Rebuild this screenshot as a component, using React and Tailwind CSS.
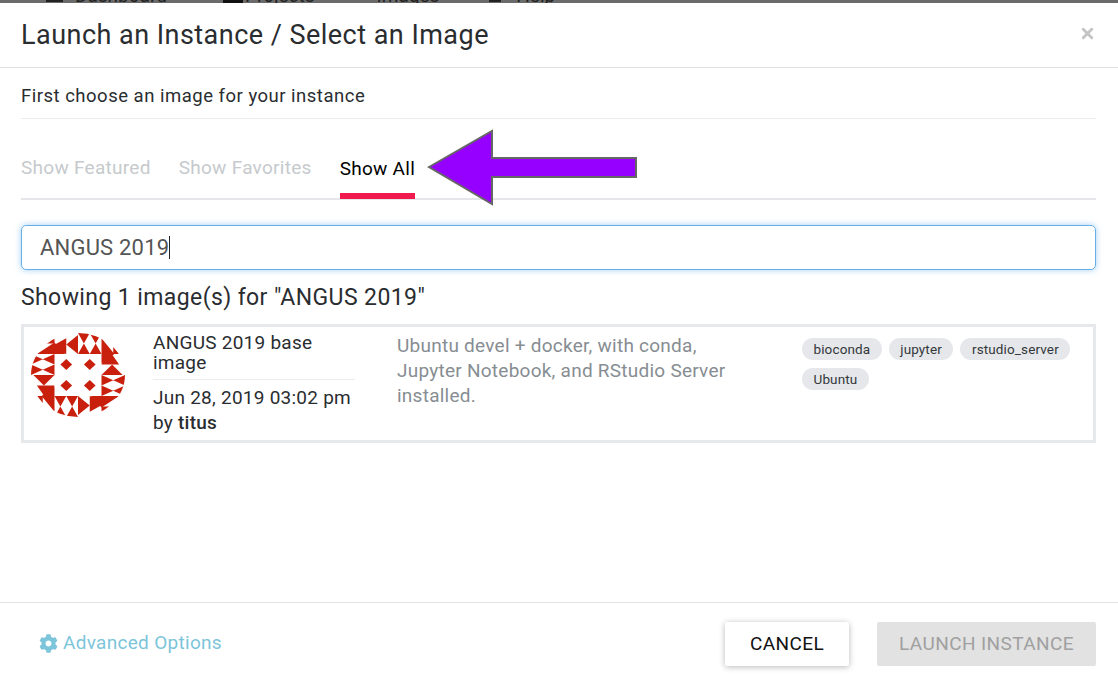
import { X } from "lucide-react";
import { FaCog } from "react-icons/fa";

const tags = ["bioconda", "jupyter", "rstudio_server", "Ubuntu"];

const LogoEdge = () => (
  <>
    {/* hourglass tile */}
    <polygon points="2,0 2.5,0 2,1 2.5,1" />
    <polygon points="2.5,0 3,0 2.5,1 3,1" />
    {/* arrow tile */}
    <polygon points="0.75,0.72 1.5,0.25 1.5,1" />
    <polygon points="1.5,0.55 2,0.1 2,1" />
    {/* corner tile */}
    <polygon points="3,0.25 3.55,1 3,1.45" />
    <polygon points="3.5,0.45 4,1 3.5,1" />
  </>
);

const Logo = () => (
  <svg width="94" height="84" viewBox="0 0 4 4" preserveAspectRatio="none" className="shrink-0 blur-[0.4px]">
    <defs>
      <clipPath id="logo-clip">
        <ellipse cx="2" cy="2" rx="2" ry="2" />
      </clipPath>
    </defs>
    <g clipPath="url(#logo-clip)" fill="#c8200c">
      <g><LogoEdge /></g>
      <g transform="rotate(90 2 2)"><LogoEdge /></g>
      <g transform="rotate(180 2 2)"><LogoEdge /></g>
      <g transform="rotate(270 2 2)"><LogoEdge /></g>
      {[[1.5, 1.5], [2.5, 1.5], [1.5, 2.5], [2.5, 2.5]].map(([x, y]) => (
        <polygon key={`${x}${y}`} points={`${x - 0.25},${y} ${x},${y - 0.26} ${x + 0.25},${y} ${x},${y + 0.26}`} />
      ))}
    </g>
  </svg>
);

export default function App() {
  return (
    <div className="w-[1118px] h-[682px] bg-white overflow-hidden flex flex-col font-['Roboto',sans-serif] text-[#2a2d30]">
      {/* bottom edge of the nav bar behind the dialog, cut off as in the screenshot */}
      <div className="h-[3px] bg-[#6b6b6b] shrink-0 overflow-hidden pl-[46px] flex text-[19px] leading-[19px] text-[#222] whitespace-nowrap">
        <span className="w-[17px] h-[2px] bg-[#222] shrink-0" />
        <span className="ml-[12px] mt-[-14px]">Dashboard</span>
        <span className="ml-[56px] w-[20px] h-[3px] bg-[#111] shrink-0" />
        <span className="ml-[2px] mt-[-14px]">Projects</span>
        <span className="ml-[62px] mt-[-14px]">Images</span>
        <span className="ml-[50px] w-[12px] h-[2px] bg-[#222] shrink-0" />
        <span className="ml-[15px] mt-[-14px]">Help</span>
      </div>

      <div className="h-[65px] shrink-0 border-b border-[#e2e2e2] pl-[21px] pr-[22px] pt-[1px] flex items-center justify-between">
        <h1 className="text-[27px] leading-none font-normal tracking-[0.47px]">Launch an Instance / Select an Image</h1>
        <X size={17} strokeWidth={4} className="text-[#c4c4c4] mb-[5px]" />
      </div>

      <div className="flex-1 min-h-0 pl-[21px] pr-[22px] flex flex-col">
        <div className="h-[51px] shrink-0 border-b border-[#ececec] flex items-center pt-[8px] text-[18.5px] tracking-[0.5px]">
          First choose an image for your instance
        </div>

        <div className="h-[81px] shrink-0 border-b-2 border-[#e4e6ea] flex items-end gap-[28px] text-[19px] tracking-[0.28px] relative">
          <div className="h-[51px] pt-[7px] text-[#c6cacd]">Show Featured</div>
          <div className="h-[51px] pt-[7px] text-[#c6cacd]">Show Favorites</div>
          <div className="h-[51px] pt-[7px] text-black border-b-[6px] border-[#f01a4e] mb-[-1px]">Show All</div>
          {/* annotation arrow */}
          <svg width="212" height="78" viewBox="0 0 212 78" className="absolute left-[406px] top-[10px]">
            <polygon points="2,38 65,2 65,29 209,29 209,48 65,48 65,75" fill="#9600ff" stroke="#666666" strokeWidth="2" />
          </svg>
        </div>

        <div className="mt-[25px] h-[45px] shrink-0 rounded-[5px] border border-[#66afe9] shadow-[0_0_6px_rgba(102,175,233,0.6)] pl-[18px] flex items-center text-[22px] tracking-[0.2px] text-[#555]">
          ANGUS 2019
          <span className="w-px h-[23px] bg-[#222]" />
        </div>

        <div className="mt-[14px] text-[23px] tracking-[0.4px] leading-[28px] shrink-0">Showing 1 image(s) for "ANGUS 2019"</div>

        <div className="mt-[12px] h-[119px] shrink-0 border-[3px] border-[#e6e8ec] flex pl-[7px] pt-[6px]">
          <Logo />
          <div className="w-[202px] ml-[28px] shrink-0 text-[19px] leading-[20px] tracking-[0.25px]">
            <div className="pb-[6px] border-b border-[#ececec]">ANGUS 2019 base image</div>
            <div className="mt-[5px] leading-[25px]">Jun 28, 2019 03:02 pm</div>
            <div className="leading-[25px]">by <b className="font-medium">titus</b></div>
          </div>
          <div className="w-[350px] ml-[42px] shrink-0 text-[19px] leading-[25px] tracking-[0.25px] text-[#878d92]">
            Ubuntu devel + docker, with conda, Jupyter Notebook, and RStudio Server installed.
          </div>
          <div className="ml-[55px] w-[280px] pt-[5px] flex flex-wrap content-start gap-x-[7px] gap-y-[8px]">
            {tags.map((t) => (
              <span key={t} className="h-[22px] px-[11.5px] rounded-full bg-[#e6e7ea] text-[13.5px] tracking-[0.13px] leading-[22px] text-[#33373a]">{t}</span>
            ))}
          </div>
        </div>
      </div>

      <div className="h-[80px] shrink-0 border-t border-[#e2e2e2] pl-[39px] pr-[22px] pt-[3px] flex items-center justify-between">
        <div className="flex items-center gap-[5px] text-[#7cc5da] text-[19px] tracking-[0.3px] mb-[2px]">
          <FaCog size={19} />
          Advanced Options
        </div>
        <div className="flex gap-[28px]">
          <div className="w-[124px] h-[44px] pt-[1px] rounded-[2px] bg-white shadow-[0_1px_6px_rgba(0,0,0,0.28)] flex items-center justify-center text-[19px] tracking-[0.4px] text-[#111]">CANCEL</div>
          <div className="w-[219px] h-[44px] pt-[1px] rounded-[2px] bg-[#e2e2e2] flex items-center justify-center text-[19px] tracking-[0.4px] text-[#a0a0a0]">LAUNCH INSTANCE</div>
        </div>
      </div>
    </div>
  );
}
